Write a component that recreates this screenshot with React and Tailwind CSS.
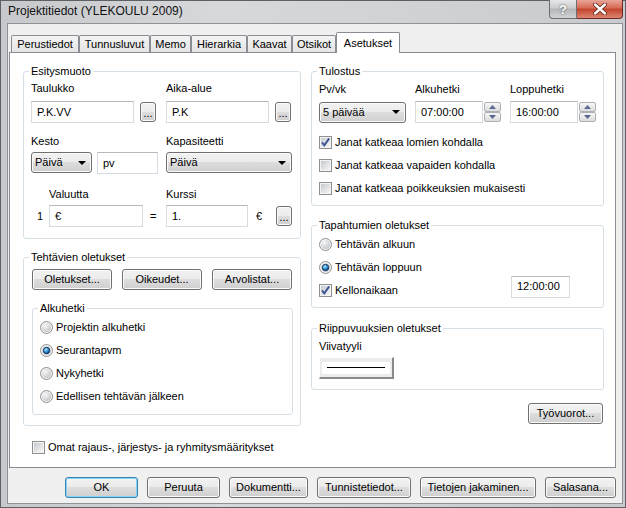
import React from 'react';

const btnFace =
  'rounded-[3px] border border-[#707070] bg-[linear-gradient(180deg,#f2f2f2_0%,#ebebeb_50%,#dddddd_50%,#cfcfcf_100%)] shadow-[inset_0_0_0_1px_#fbfbfb]';

function Btn({ children, className = '', focused = false }) {
  return (
    <div
      className={`flex items-center justify-center ${
        focused
          ? 'rounded-[3px] border border-[#3c7fb1] bg-[linear-gradient(180deg,#f2f2f2_0%,#ebebeb_50%,#dddddd_50%,#cfcfcf_100%)] shadow-[inset_0_0_0_1px_#7fd8f7]'
          : btnFace
      } ${className}`}
    >
      {children}
    </div>
  );
}

function Dots() {
  return <Btn className="h-[20px] w-[16px] shrink-0 pt-[3px]">...</Btn>;
}

function Select({ value, className = '' }) {
  return (
    <div className={`flex h-[21px] items-center justify-between pl-[3px] pr-[5px] ${btnFace} ${className}`}>
      <span>{value}</span>
      <svg width="8" height="4" viewBox="0 0 8 4">
        <path d="M0 0h8L4 4z" fill="#000" />
      </svg>
    </div>
  );
}

function Field({ children, className = '' }) {
  return (
    <div className={`flex h-[22px] shrink-0 items-center border border-[#d6dae1] border-t-[#b4b7be] bg-white pl-[5px] ${className}`}>
      {children}
    </div>
  );
}

function Check({ checked }) {
  return (
    <svg width="13" height="13" viewBox="0 0 13 13" className="shrink-0">
      <defs>
        <linearGradient id="cbFill" x1="0" y1="0" x2="1" y2="1">
          <stop offset="0" stopColor="#c6cad0" />
          <stop offset="1" stopColor="#f6f6f6" />
        </linearGradient>
      </defs>
      <rect x="0.5" y="0.5" width="12" height="12" fill="#f4f4f4" stroke="#8e8f8f" />
      <rect x="2" y="2" width="9" height="9" fill="url(#cbFill)" />
      {checked && <path d="M3 6.3l2.3 3L10.2 2.4" fill="none" stroke="#3f5592" strokeWidth="1.9" />}
    </svg>
  );
}

function Radio({ on }) {
  return (
    <svg width="13" height="13" viewBox="0 0 13 13" className="shrink-0">
      <defs>
        <radialGradient id="rbFill" cx="0.35" cy="0.3" r="0.75">
          <stop offset="0" stopColor="#f8f8f8" />
          <stop offset="1" stopColor="#c3c6cb" />
        </radialGradient>
        <radialGradient id="rbDot" cx="0.4" cy="0.35" r="0.65">
          <stop offset="0" stopColor="#b5ebff" />
          <stop offset="0.55" stopColor="#2f90d4" />
          <stop offset="1" stopColor="#0d4a86" />
        </radialGradient>
      </defs>
      <circle cx="6.5" cy="6.5" r="6" fill="#f3f3f3" stroke="#8e8f8f" />
      <circle cx="6.5" cy="6.5" r="4.5" fill="url(#rbFill)" />
      {on && <circle cx="6.5" cy="6.5" r="3.2" fill="url(#rbDot)" stroke="#1c3b5f" strokeWidth="1" />}
    </svg>
  );
}

function Spin() {
  const part = 'flex h-[10px] items-center justify-center rounded-[2px] border border-[#adb0b5] bg-[linear-gradient(180deg,#f6f6f6,#dcdcdc)]';
  return (
    <div className="flex w-[17px] shrink-0 flex-col">
      <div className={part}>
        <svg width="7" height="4" viewBox="0 0 7 4">
          <path d="M0 4h7L3.5 0z" fill="#556a92" />
        </svg>
      </div>
      <div className={part}>
        <svg width="7" height="4" viewBox="0 0 7 4">
          <path d="M0 0h7L3.5 4z" fill="#556a92" />
        </svg>
      </div>
    </div>
  );
}

function Group({ title, className = '', children }) {
  return (
    <fieldset className={`rounded-[3px] border border-[#d5dfe5] px-[7px] ${className}`}>
      <legend className="-ml-[2px] px-[2px] leading-[13px]">{title}</legend>
      {children}
    </fieldset>
  );
}

function CheckRow({ checked, label, className = '' }) {
  return (
    <div className={`flex h-[23px] items-center gap-[3px] ${className}`}>
      <Check checked={checked} />
      <span>{label}</span>
    </div>
  );
}

function RadioRow({ on, label }) {
  return (
    <div className="flex h-[23px] items-center gap-[3px]">
      <Radio on={on} />
      <span>{label}</span>
    </div>
  );
}

const tabs = [
  ['Perustiedot', 'w-[68px]'],
  ['Tunnusluvut', 'w-[71px]'],
  ['Memo', 'w-[41px]'],
  ['Hierarkia', 'w-[56px]'],
  ['Kaavat', 'w-[45px]'],
  ['Otsikot', 'w-[44px]'],
];

export default function App() {
  return (
    <div className="flex h-[508px] w-[626px] flex-col border border-[#5d6166] bg-[linear-gradient(90deg,#c6c8cb,#d6d8da_35%,#d0d2d4_65%,#c8cacd)] font-['Liberation_Sans',Arial,sans-serif] text-[11px] leading-[13px] text-black">
      {/* title bar */}
      <div className="flex h-[22px] shrink-0 items-start justify-between">
        <div className="pl-[7px] pt-[3px] text-[12px] leading-[15px] text-[#111]">Projektitiedot (YLEKOULU 2009)</div>
        <div className="mr-[2px] flex -mt-[1px]">
          <div className="flex h-[19px] w-[28px] items-center justify-center rounded-bl-[4px] border border-t-0 border-[#6b6e73] bg-[linear-gradient(180deg,#e6e7e8,#cacbcd_45%,#b3b5b8_50%,#d2d3d5)] text-[13px] font-bold text-white [text-shadow:0_0_2px_#333]">
            ?
          </div>
          <div className="flex h-[19px] w-[46px] items-center justify-center rounded-br-[4px] border border-l-0 border-t-0 border-[#6b2b22] bg-[linear-gradient(180deg,#eaa597,#d66a55_45%,#c2432d_50%,#dc8570)]">
            <svg width="14" height="12" viewBox="0 0 14 12">
              <path d="M2 1.5l10 9M12 1.5l-10 9" stroke="#5a1d14" strokeWidth="4" strokeLinecap="round" />
              <path d="M2 1.5l10 9M12 1.5l-10 9" stroke="#fff" strokeWidth="2.4" strokeLinecap="round" />
            </svg>
          </div>
        </div>
      </div>

      {/* client area */}
      <div className="ml-[6px] flex h-[481px] w-[616px] flex-col border border-[#8e9297] bg-[#f0f0f0] pl-[1px] pt-[8px]">
        {/* tabs */}
        <div className="relative z-10 -mb-[1px] flex h-[21px] items-end pl-[2px]">
          {tabs.map(([name, w]) => (
            <div
              key={name}
              className={`mb-[1px] flex h-[17px] items-center justify-center rounded-t-[2px] border border-b-0 border-[#898c95] bg-[linear-gradient(180deg,#f4f4f4,#e4e4e4)] ${w}`}
            >
              {name}
            </div>
          ))}
          <div className="flex h-[21px] w-[64px] items-center justify-center rounded-t-[2px] border border-b-0 border-[#898c95] bg-white">
            Asetukset
          </div>
        </div>

        {/* tab page */}
        <div className="flex h-[416px] w-[607px] gap-[10px] border border-[#898c95] bg-white pl-[13px] pt-[12px]">
          {/* left column */}
          <div className="flex w-[278px] flex-col">
            <Group title="Esitysmuoto" className="pb-[11px]">
              <div className="mt-[4px] flex">
                <div className="w-[135px]">
                  <div>Taulukko</div>
                  <div className="mt-[6px] flex items-center gap-[6px]">
                    <Field className="w-[103px]">P.K.VV</Field>
                    <Dots />
                  </div>
                </div>
                <div>
                  <div>Aika-alue</div>
                  <div className="mt-[6px] flex items-center gap-[6px]">
                    <Field className="w-[103px]">P.K</Field>
                    <Dots />
                  </div>
                </div>
              </div>

              <div className="mt-[12px] flex">
                <div className="w-[135px]">
                  <div>Kesto</div>
                  <div className="mt-[4px] flex gap-[5px]">
                    <Select value="Päivä" className="w-[61px]" />
                    <Field className="h-[21px] w-[61px]">pv</Field>
                  </div>
                </div>
                <div>
                  <div>Kapasiteetti</div>
                  <Select value="Päivä" className="mt-[4px] w-[126px]" />
                </div>
              </div>

              <div className="mt-[14px] flex">
                <div className="w-[135px] pl-[18px]">Valuutta</div>
                <div>Kurssi</div>
              </div>
              <div className="mt-[4px] flex items-center">
                <span className="w-[18px] pl-[6px]">1</span>
                <Field className="w-[94px]">€</Field>
                <span className="w-[23px] pl-[7px]">=</span>
                <Field className="w-[82px]">1.</Field>
                <span className="w-[28px] pl-[8px]">€</span>
                <Dots />
              </div>
            </Group>

            <Group title="Tehtävien oletukset" className="mt-[12px] pb-[10px]">
              <div className="mt-[5px] flex gap-[10px] pl-[1px]">
                <Btn className="h-[21px] w-[80px]">Oletukset...</Btn>
                <Btn className="h-[21px] w-[80px]">Oikeudet...</Btn>
                <Btn className="h-[21px] w-[80px]">Arvolistat...</Btn>
              </div>
              <Group title="Alkuhetki" className="ml-[1px] mt-[12px] pb-[6px]">
                <div className="mt-[1px]">
                  <RadioRow label="Projektin alkuhetki" />
                  <RadioRow on label="Seurantapvm" />
                  <RadioRow label="Nykyhetki" />
                  <RadioRow label="Edellisen tehtävän jälkeen" />
                </div>
              </Group>
            </Group>

            <div className="ml-[9px] mt-[15px] flex h-[13px] items-center gap-[3px]">
              <Check />
              <span>Omat rajaus-, järjestys- ja ryhmitysmääritykset</span>
            </div>
          </div>

          {/* right column */}
          <div className="flex w-[293px] flex-col">
            <Group title="Tulostus" className="pb-[5px]">
              <div className="mt-[5px] flex">
                <div className="w-[96px]">Pv/vk</div>
                <div className="w-[95px]">Alkuhetki</div>
                <div>Loppuhetki</div>
              </div>
              <div className="mt-[5px] flex h-[22px] items-center">
                <div className="w-[96px]">
                  <Select value="5 päivää" className="w-[87px]" />
                </div>
                <div className="flex w-[95px] items-center gap-[1px]">
                  <Field className="w-[68px]">07:00:00</Field>
                  <Spin />
                </div>
                <div className="flex items-center gap-[1px]">
                  <Field className="w-[68px]">16:00:00</Field>
                  <Spin />
                </div>
              </div>
              <div className="mt-[8px]">
                <CheckRow checked label="Janat katkeaa lomien kohdalla" />
                <CheckRow label="Janat katkeaa vapaiden kohdalla" />
                <CheckRow label="Janat katkeaa poikkeuksien mukaisesti" />
              </div>
            </Group>

            <Group title="Tapahtumien oletukset" className="mt-[13px] pb-[5px]">
              <div className="mt-[1px]">
                <RadioRow label="Tehtävän alkuun" />
                <RadioRow on label="Tehtävän loppuun" />
                <div className="flex h-[23px] items-center">
                  <CheckRow checked label="Kellonaikaan" className="w-[192px]" />
                  <Field className="-mt-[8px] w-[59px]">12:00:00</Field>
                </div>
              </div>
            </Group>

            <Group title="Riippuvuuksien oletukset" className="mt-[14px] pb-[10px]">
              <div className="mt-[5px]">Viivatyyli</div>
              <div className="mt-[4px] flex h-[22px] w-[75px] flex-col justify-center border-l border-t border-r-2 border-b-2 border-l-white border-t-white border-r-[#8a8a8a] border-b-[#8a8a8a] bg-[#ececec] px-[2px]">
                <div className="flex h-[12px] items-center bg-white px-[5px]">
                  <div className="h-[1px] w-full bg-black" />
                </div>
              </div>
            </Group>

            <div className="mr-[1px] mt-[13px] flex justify-end">
              <Btn className="h-[21px] w-[75px]">Työvuorot...</Btn>
            </div>
          </div>
        </div>

        {/* dialog buttons */}
        <div className="mt-[9px] flex w-[607px] justify-end gap-[9px]">
          <Btn focused className="h-[21px] w-[73px]">OK</Btn>
          <Btn className="h-[21px] w-[73px]">Peruuta</Btn>
          <Btn className="h-[21px] w-[79px]">Dokumentti...</Btn>
          <Btn className="h-[21px] w-[94px]">Tunnistetiedot...</Btn>
          <Btn className="h-[21px] w-[116px]">Tietojen jakaminen...</Btn>
          <Btn className="h-[21px] w-[71px]">Salasana...</Btn>
        </div>
      </div>
    </div>
  );
}
